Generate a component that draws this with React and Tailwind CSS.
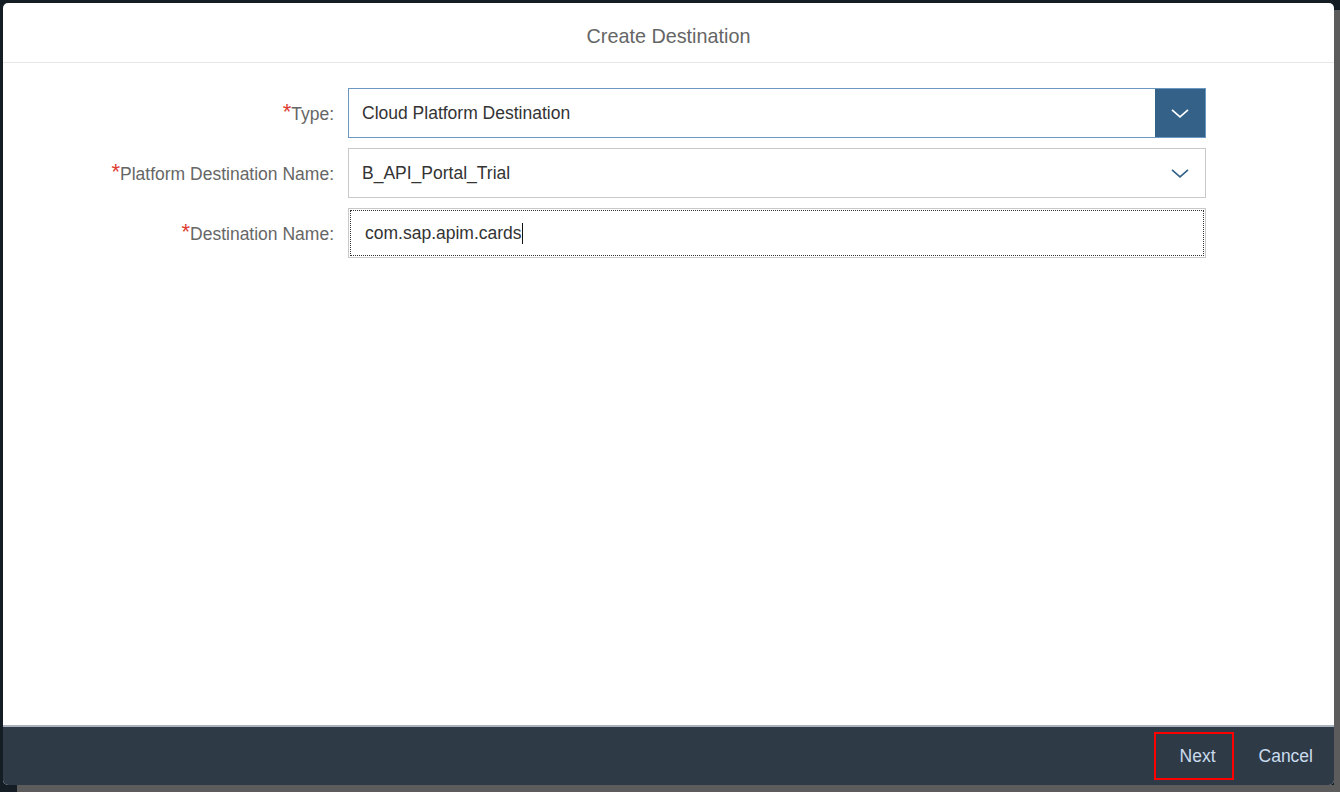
import React from "react";

function Chevron({ color = "#ffffff", size = 18 }) {
  return (
    <svg width={size} height={size * 0.6} viewBox="0 0 18 10" fill="none">
      <path d="M1 1.5 L9 8.5 L17 1.5" stroke={color} strokeWidth="1.6" />
    </svg>
  );
}

function Label({ children }) {
  return (
    <div className="flex justify-end items-center text-[17.5px] text-[#666666] whitespace-nowrap pt-[3px]">
      <span className="text-[#e03c31] text-[22px] leading-none relative top-[-3px]">*</span>
      <span>{children}</span>
    </div>
  );
}

export default function App() {
  return (
    <div
      className="w-[1340px] h-[792px] bg-[#141c24] flex flex-col overflow-hidden"
      style={{ fontFamily: '"Liberation Sans", Arial, sans-serif' }}
    >
      <div className="flex flex-row pt-[3px] h-[785px]">
        <div className="w-[3px]" />
        <div className="w-[1331px] h-[782px] bg-white rounded-[5px] flex flex-col overflow-hidden">
          <div className="h-[60px] flex items-center justify-center pt-[8px] border-b border-[#e8e8e8] text-[19.8px] text-[#666666]">
            Create Destination
          </div>
          <div className="flex-1 pt-[25px]">
            <div className="grid grid-cols-[331px_858px] gap-x-[14px] gap-y-[10px]">
              <Label>Type:</Label>
              <div className="h-[50px] border border-[#6b97c2] flex items-stretch">
                <div className="flex-1 flex items-center pl-[13px] text-[17.5px] text-[#333333]">
                  Cloud Platform Destination
                </div>
                <div className="w-[50px] bg-[#346187] flex items-center justify-center">
                  <Chevron color="#ffffff" />
                </div>
              </div>

              <Label>Platform Destination Name:</Label>
              <div className="h-[50px] border border-[#c9c9c9] flex items-stretch">
                <div className="flex-1 flex items-center pl-[13px] text-[17.5px] text-[#333333]">
                  B_API_Portal_Trial
                </div>
                <div className="w-[50px] flex items-center justify-center">
                  <Chevron color="#346187" />
                </div>
              </div>

              <Label>Destination Name:</Label>
              <div className="h-[50px] border border-[#c9c9c9] p-[1px] flex">
                <div className="flex-1 border border-dotted border-[#333333] flex items-center pl-[14px] text-[17.5px] text-[#333333]">
                  <span>com.sap.apim.cards</span>
                  <span className="inline-block w-[1px] h-[21px] bg-[#111111]" />
                </div>
              </div>
            </div>
          </div>
          <div className="h-[60px] bg-[#2f3a47] border-t-2 border-[#aab3bd] flex items-center justify-end pr-[21px]">
            <div className="w-[80px] h-[48px] border-2 border-[#ff0000] flex items-center justify-center pl-[8px] text-[17.5px] text-[#cadcee] mr-[25px]">
              Next
            </div>
            <div className="text-[17.5px] text-[#cadcee]">Cancel</div>
          </div>
        </div>
        <div className="flex-1 flex flex-col pt-[7px]">
          <div className="flex-1 bg-[#5c5c5c]" />
        </div>
      </div>
      <div className="flex-1 flex flex-row">
        <div className="w-[17px]" />
        <div className="flex-1 bg-[#5c5c5c]" />
      </div>
    </div>
  );
}
